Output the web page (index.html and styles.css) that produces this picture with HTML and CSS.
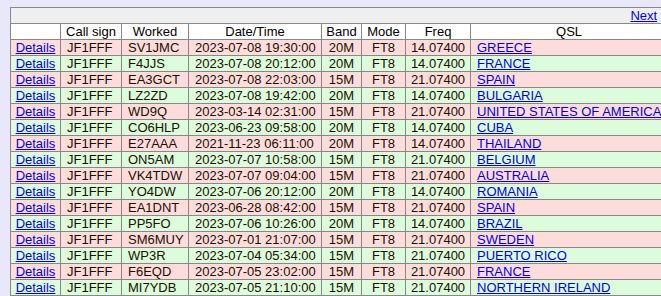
FILE: index.html
```html
<!DOCTYPE html>
<html>
<head>
<meta charset="utf-8">
<link rel="stylesheet" href="styles.css">
</head>
<body>
<table class="log">
<colgroup>
<col class="c-details"><col class="c-call"><col class="c-worked"><col class="c-date"><col class="c-band"><col class="c-mode"><col class="c-freq"><col class="c-qsl">
</colgroup>
<thead>
<tr class="nav"><td colspan="8"><a href="#">Next</a></td></tr>
<tr class="head"><th></th><th>Call sign</th><th>Worked</th><th>Date/Time</th><th>Band</th><th>Mode</th><th>Freq</th><th>QSL</th></tr>
</thead>
<tbody>
<tr class="pink"><td><a href="#">Details</a></td><td class="l">JF1FFF</td><td class="l">SV1JMC</td><td class="l">2023-07-08 19:30:00</td><td>20M</td><td>FT8</td><td>14.07400</td><td class="qsl"><a href="#">GREECE</a></td></tr>
<tr class="green"><td><a href="#">Details</a></td><td class="l">JF1FFF</td><td class="l">F4JJS</td><td class="l">2023-07-08 20:12:00</td><td>20M</td><td>FT8</td><td>14.07400</td><td class="qsl"><a href="#">FRANCE</a></td></tr>
<tr class="pink"><td><a href="#">Details</a></td><td class="l">JF1FFF</td><td class="l">EA3GCT</td><td class="l">2023-07-08 22:03:00</td><td>15M</td><td>FT8</td><td>21.07400</td><td class="qsl"><a href="#">SPAIN</a></td></tr>
<tr class="green"><td><a href="#">Details</a></td><td class="l">JF1FFF</td><td class="l">LZ2ZD</td><td class="l">2023-07-08 19:42:00</td><td>20M</td><td>FT8</td><td>14.07400</td><td class="qsl"><a href="#">BULGARIA</a></td></tr>
<tr class="pink"><td><a href="#">Details</a></td><td class="l">JF1FFF</td><td class="l">WD9Q</td><td class="l">2023-03-14 02:31:00</td><td>15M</td><td>FT8</td><td>21.07400</td><td class="qsl"><a href="#">UNITED STATES OF AMERICA</a></td></tr>
<tr class="green"><td><a href="#">Details</a></td><td class="l">JF1FFF</td><td class="l">CO6HLP</td><td class="l">2023-06-23 09:58:00</td><td>20M</td><td>FT8</td><td>14.07400</td><td class="qsl"><a href="#">CUBA</a></td></tr>
<tr class="pink"><td><a href="#">Details</a></td><td class="l">JF1FFF</td><td class="l">E27AAA</td><td class="l">2021-11-23 06:11:00</td><td>20M</td><td>FT8</td><td>14.07400</td><td class="qsl"><a href="#">THAILAND</a></td></tr>
<tr class="green"><td><a href="#">Details</a></td><td class="l">JF1FFF</td><td class="l">ON5AM</td><td class="l">2023-07-07 10:58:00</td><td>15M</td><td>FT8</td><td>21.07400</td><td class="qsl"><a href="#">BELGIUM</a></td></tr>
<tr class="pink"><td><a href="#">Details</a></td><td class="l">JF1FFF</td><td class="l">VK4TDW</td><td class="l">2023-07-07 09:04:00</td><td>15M</td><td>FT8</td><td>21.07400</td><td class="qsl"><a href="#">AUSTRALIA</a></td></tr>
<tr class="green"><td><a href="#">Details</a></td><td class="l">JF1FFF</td><td class="l">YO4DW</td><td class="l">2023-07-06 20:12:00</td><td>20M</td><td>FT8</td><td>14.07400</td><td class="qsl"><a href="#">ROMANIA</a></td></tr>
<tr class="pink"><td><a href="#">Details</a></td><td class="l">JF1FFF</td><td class="l">EA1DNT</td><td class="l">2023-06-28 08:42:00</td><td>15M</td><td>FT8</td><td>21.07400</td><td class="qsl"><a href="#">SPAIN</a></td></tr>
<tr class="green"><td><a href="#">Details</a></td><td class="l">JF1FFF</td><td class="l">PP5FO</td><td class="l">2023-07-06 10:26:00</td><td>20M</td><td>FT8</td><td>14.07400</td><td class="qsl"><a href="#">BRAZIL</a></td></tr>
<tr class="pink"><td><a href="#">Details</a></td><td class="l">JF1FFF</td><td class="l">SM6MUY</td><td class="l">2023-07-01 21:07:00</td><td>15M</td><td>FT8</td><td>21.07400</td><td class="qsl"><a href="#">SWEDEN</a></td></tr>
<tr class="green"><td><a href="#">Details</a></td><td class="l">JF1FFF</td><td class="l">WP3R</td><td class="l">2023-07-04 05:34:00</td><td>15M</td><td>FT8</td><td>21.07400</td><td class="qsl"><a href="#">PUERTO RICO</a></td></tr>
<tr class="pink"><td><a href="#">Details</a></td><td class="l">JF1FFF</td><td class="l">F6EQD</td><td class="l">2023-07-05 23:02:00</td><td>15M</td><td>FT8</td><td>21.07400</td><td class="qsl"><a href="#">FRANCE</a></td></tr>
<tr class="green"><td><a href="#">Details</a></td><td class="l">JF1FFF</td><td class="l">MI7YDB</td><td class="l">2023-07-05 21:10:00</td><td>15M</td><td>FT8</td><td>21.07400</td><td class="qsl"><a href="#">NORTHERN IRELAND</a></td></tr>
</tbody>
</table>
</body>
</html>
```
FILE: styles.css
```css
html {
  overflow: hidden;
  background: #e8e8fa;
}
body {
  margin: 7px 0 0 10px;
  font-family: "Liberation Sans", Arial, sans-serif;
  font-size: 13px;
  color: #1a1000;
}
.log {
  border-collapse: collapse;
  table-layout: fixed;
  width: 657px;
}
.log td, .log th {
  border: 1px solid #888888;
  padding: 0;
  line-height: 15px;
  height: 15px;
  text-align: center;
  white-space: nowrap;
  overflow: hidden;
  font-weight: normal;
}
.c-details { width: 50px; }
.c-call { width: 61px; }
.c-worked { width: 67px; }
.c-date { width: 133px; }
.c-band { width: 40px; }
.c-mode { width: 44px; }
.c-freq { width: 65px; }
.c-qsl { width: 197px; }
.nav td {
  background: #efefef;
  text-align: right;
  padding-right: 10px;
}
.head th {
  background: #ffffff;
  color: #000000;
}
.pink td { background: #ffdcdc; }
.green td { background: #dcfcdc; }
.log td.l {
  text-align: left;
  padding-left: 6px;
}
.log td.qsl {
  text-align: left;
  padding-left: 6px;
}
a {
  color: #0000ee;
  text-decoration: underline;
}
```
